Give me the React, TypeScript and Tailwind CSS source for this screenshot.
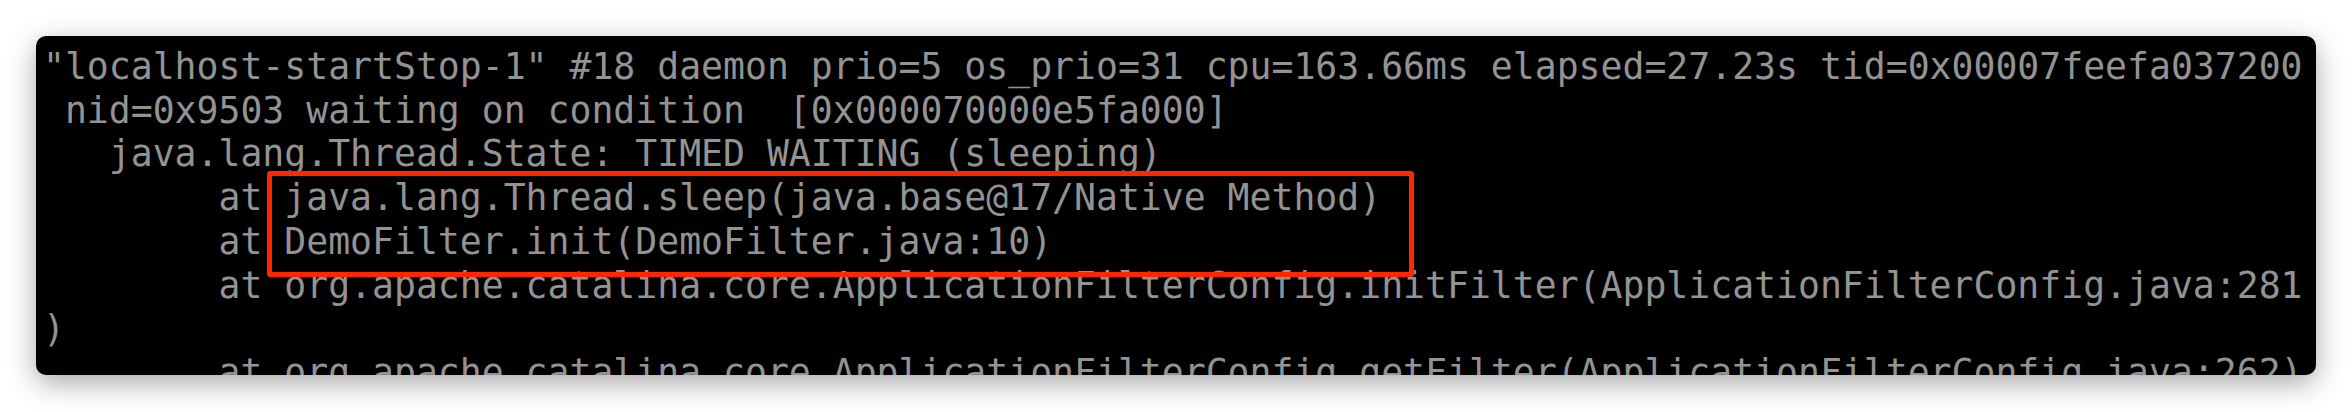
import React from 'react';

const lines = [
  '"localhost-startStop-1" #18 daemon prio=5 os_prio=31 cpu=163.66ms elapsed=27.23s tid=0x00007feefa037200',
  ' nid=0x9503 waiting on condition  [0x000070000e5fa000]',
  '   java.lang.Thread.State: TIMED_WAITING (sleeping)',
  '        at java.lang.Thread.sleep(java.base@17/Native Method)',
  '        at DemoFilter.init(DemoFilter.java:10)',
  '        at org.apache.catalina.core.ApplicationFilterConfig.initFilter(ApplicationFilterConfig.java:281',
  ')',
  '        at org.apache.catalina.core.ApplicationFilterConfig.getFilter(ApplicationFilterConfig.java:262)',
];

export default function App() {
  return (
    <div className="w-[2352px] h-[412px] bg-white pt-[36px] pl-[36px]">
      <div className="relative w-[2280px] h-[339px] overflow-hidden rounded-[10px] bg-black shadow-[0_8px_28px_rgba(0,0,0,0.35)]">
        <div
          className="pl-[7px] pt-[9px] text-[#939393] text-[36.45px] leading-[43.7px] whitespace-pre"
          style={{ fontFamily: '"DejaVu Sans Mono", "Liberation Mono", monospace' }}
        >
          {lines.map((line, i) => (
            <div key={i}>{line}</div>
          ))}
        </div>

        {/* highlight box */}
        <div className="absolute left-[231px] top-[135px] w-[1147px] h-[106px] border-[5px] border-[#ff2600] rounded-[3px]" />
      </div>
    </div>
  );
}
